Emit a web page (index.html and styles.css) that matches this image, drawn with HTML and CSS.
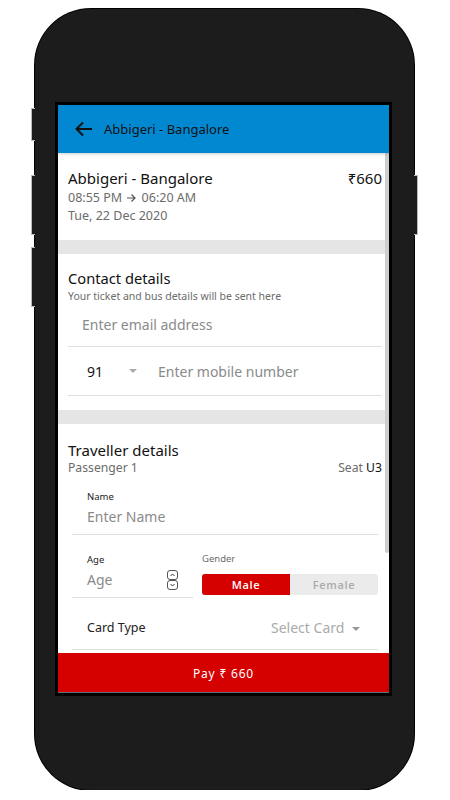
FILE: index.html
```html
<!DOCTYPE html>
<html lang="en">
<head>
  <meta charset="UTF-8" />
  <meta name="viewport" content="width=device-width, initial-scale=1.0"/>
  <title>Checkout</title>
  <link rel="stylesheet" href="styles.css">
</head>
<body>

  <div class="phone">
    <span class="side-btn left b1"></span>
    <span class="side-btn left b2"></span>
    <span class="side-btn left b3"></span>
    <span class="side-btn right b2"></span>

    <div class="screen">
      <header class="topbar">
        <svg class="back" width="18" height="16" viewBox="0 0 18 16">
          <path d="M17 8H2M8 1.5L1.5 8 8 14.5" fill="none" stroke="#111" stroke-width="2"/>
        </svg>
        <span class="topbar-title">Abbigeri - Bangalore</span>
      </header>

      <div class="content">
        <section class="trip">
          <div class="trip-row">
            <span class="trip-title">Abbigeri - Bangalore</span>
            <span class="trip-price">₹660</span>
          </div>
          <div class="trip-time">08:55 PM
            <svg class="arrow" width="11" height="10" viewBox="0 0 11 10">
              <path d="M1 5h8M5.5 1.5L9 5 5.5 8.5" fill="none" stroke="#555" stroke-width="1.2"/>
            </svg>
            06:20 AM</div>
          <div class="trip-date">Tue, 22 Dec 2020</div>
        </section>

        <div class="gap"></div>

        <section class="block">
          <h2>Contact details</h2>
          <p class="sub">Your ticket and bus details will be sent here</p>
          <div class="field email">Enter email address</div>
          <div class="field phone-row">
            <span class="code">91</span>
            <span class="caret"></span>
            <span class="ph">Enter mobile number</span>
          </div>
        </section>

        <div class="gap"></div>

        <section class="block traveller">
          <h2>Traveller details</h2>
          <div class="pass-row">
            <span>Passenger 1</span>
            <span>Seat <b>U3</b></span>
          </div>

          <div class="input name">
            <label>Name</label>
            <div class="ph">Enter Name</div>
          </div>

          <div class="age-row">
            <div class="input age">
              <label>Age</label>
              <div class="age-box">
                <span class="ph">Age</span>
                <svg class="spin" width="11" height="20" viewBox="0 0 11 20">
                  <rect x="0.5" y="0.5" width="10" height="9" rx="2.5" fill="#fff" stroke="#555"/>
                  <rect x="0.5" y="10.5" width="10" height="9" rx="2.5" fill="#fff" stroke="#555"/>
                  <path d="M3.5 6L5.5 4 7.5 6M3.5 14L5.5 16 7.5 14" fill="none" stroke="#333" stroke-width="1"/>
                </svg>
              </div>
            </div>
            <div class="gender">
              <label>Gender</label>
              <div class="toggle">
                <span class="opt on">Male</span>
                <span class="opt">Female</span>
              </div>
            </div>
          </div>

          <div class="input card">
            <span>Card Type</span>
            <span class="select">Select Card <span class="caret"></span></span>
          </div>
        </section>

        <div class="scroll-thumb"></div>
      </div>

      <button class="pay">Pay ₹ 660</button>
    </div>
  </div>

</body>
</html>
```

FILE: styles.css
```css
:root {
  --blue: #0288d1;
  --red: #d50000;
  --line: #e0e0e0;
  --muted: #6b6b6b;
  --ph: #8a8a8a;
}

body {
  margin: 0;
  font-family: 'Noto Sans', 'Open Sans', sans-serif;
  background: #fff;
  color: #111;
}

.phone {
  position: relative;
  width: 379px;
  height: 781px;
  margin: 9px 0 0 35px;
  box-sizing: border-box;
  padding: 93px 22px 0 20px;
  background: #1c1c1c;
  border-radius: 56px;
  box-shadow: 0 0 0 1px #000;
}

.side-btn {
  position: absolute;
  width: 3px;
  background: #1c1c1c;
  border: 1px solid #bbb;
}

.side-btn.left {
  left: -4px;
  border-right: none;
}

.side-btn.right {
  right: -4px;
  border-left: none;
}

.b1 { top: 99px; height: 31px; }
.b2 { top: 166px; height: 58px; }
.b3 { top: 238px; height: 58px; }

.screen {
  position: relative;
  width: 331px;
  height: 588px;
  border: 3px solid #000;
  background: #fff;
  display: flex;
  flex-direction: column;
  overflow: hidden;
}

.topbar {
  height: 48px;
  flex-shrink: 0;
  background: var(--blue);
  display: flex;
  align-items: center;
  padding-left: 17px;
  box-shadow: 0 1px 3px rgba(0, 0, 0, 0.2);
  z-index: 1;
}

.back {
  margin-right: 11px;
}

.topbar-title {
  font-size: 13px;
  color: #111;
}

.content {
  position: relative;
  flex: 1;
  overflow: hidden;
}

.trip {
  padding: 14px 7px 15px 10px;
}

.trip-row {
  display: flex;
  justify-content: space-between;
  font-size: 15px;
  line-height: 22px;
}

.trip-time,
.trip-date {
  font-size: 12.5px;
  line-height: 18px;
  color: var(--muted);
}

.arrow {
  vertical-align: -1px;
  margin: 0 1px;
}

.gap {
  height: 14px;
  background: #e5e5e5;
}

.block {
  padding: 14px 7px 14px 10px;
}

.block h2 {
  margin: 0;
  font-size: 14.7px;
  font-weight: 400;
  line-height: 20px;
}

.sub {
  margin: 0;
  font-size: 10.5px;
  line-height: 16px;
  color: var(--muted);
}

.field {
  border-bottom: 1px solid var(--line);
  font-size: 14px;
  color: var(--ph);
}

.email {
  line-height: 42px;
  padding-left: 14px;
}

.phone-row {
  display: flex;
  align-items: center;
  height: 48px;
}

.code {
  color: #111;
  margin-left: 19px;
  width: 42px;
}

.caret {
  display: inline-block;
  width: 0;
  height: 0;
  border-left: 4px solid transparent;
  border-right: 4px solid transparent;
  border-top: 4px solid #aaa;
  vertical-align: middle;
}

.phone-row .ph {
  margin-left: 21px;
}

.traveller {
  padding-top: 16px;
}

.traveller h2 {
  font-size: 15px;
}

.pass-row {
  display: flex;
  justify-content: space-between;
  font-size: 12.2px;
  line-height: 16px;
  color: var(--muted);
}

.pass-row b {
  font-weight: 400;
  color: #111;
}

.input {
  margin: 0 4px;
  border-bottom: 1px solid var(--line);
  padding: 0 0 4px 15px;
}

.input label,
.gender label {
  display: block;
  font-size: 9.5px;
  line-height: 14px;
  color: #222;
}

.input .ph {
  font-size: 14px;
  line-height: 26px;
  color: var(--ph);
}

.name {
  margin-top: 14px;
}

.age-row {
  display: flex;
  margin-top: 18px;
}

.age {
  width: 106px;
  margin-right: 0;
}

.age-box {
  display: flex;
  align-items: center;
  justify-content: space-between;
  padding-right: 15px;
}

.spin {
  display: block;
}

.gender {
  margin-left: 9px;
  flex: 1;
  margin-right: 4px;
}

.gender label {
  color: var(--muted);
  line-height: 12px;
}

.toggle {
  display: flex;
  margin-top: 9px;
  height: 21px;
  border-radius: 3px;
  overflow: hidden;
  background: #ebebeb;
}

.opt {
  flex: 1;
  text-align: center;
  font-family: 'Open Sans', 'Noto Sans', sans-serif;
  font-size: 11px;
  font-weight: 600;
  letter-spacing: 0.7px;
  line-height: 22px;
  color: #aaa;
}

.opt.on {
  background: var(--red);
  color: #fff;
}

.card {
  display: flex;
  justify-content: space-between;
  align-items: center;
  padding: 19px 18px 10px 15px;
  font-size: 12.5px;
  line-height: 22px;
  color: #222;
}

.select {
  font-size: 14px;
  color: #aaa;
}

.select .caret {
  margin-left: 4px;
  border-top-color: #999;
}

.scroll-thumb {
  position: absolute;
  top: 0;
  right: 0;
  width: 4px;
  height: 400px;
  background: #cdcdcd;
  border-radius: 0 0 2px 2px;
}

.pay {
  flex-shrink: 0;
  height: 40px;
  padding-top: 3px;
  border: none;
  border-bottom: 1px solid #5a6f7a;
  background: var(--red);
  color: #fff;
  font-family: inherit;
  font-size: 12px;
  letter-spacing: 0.8px;
}
```
